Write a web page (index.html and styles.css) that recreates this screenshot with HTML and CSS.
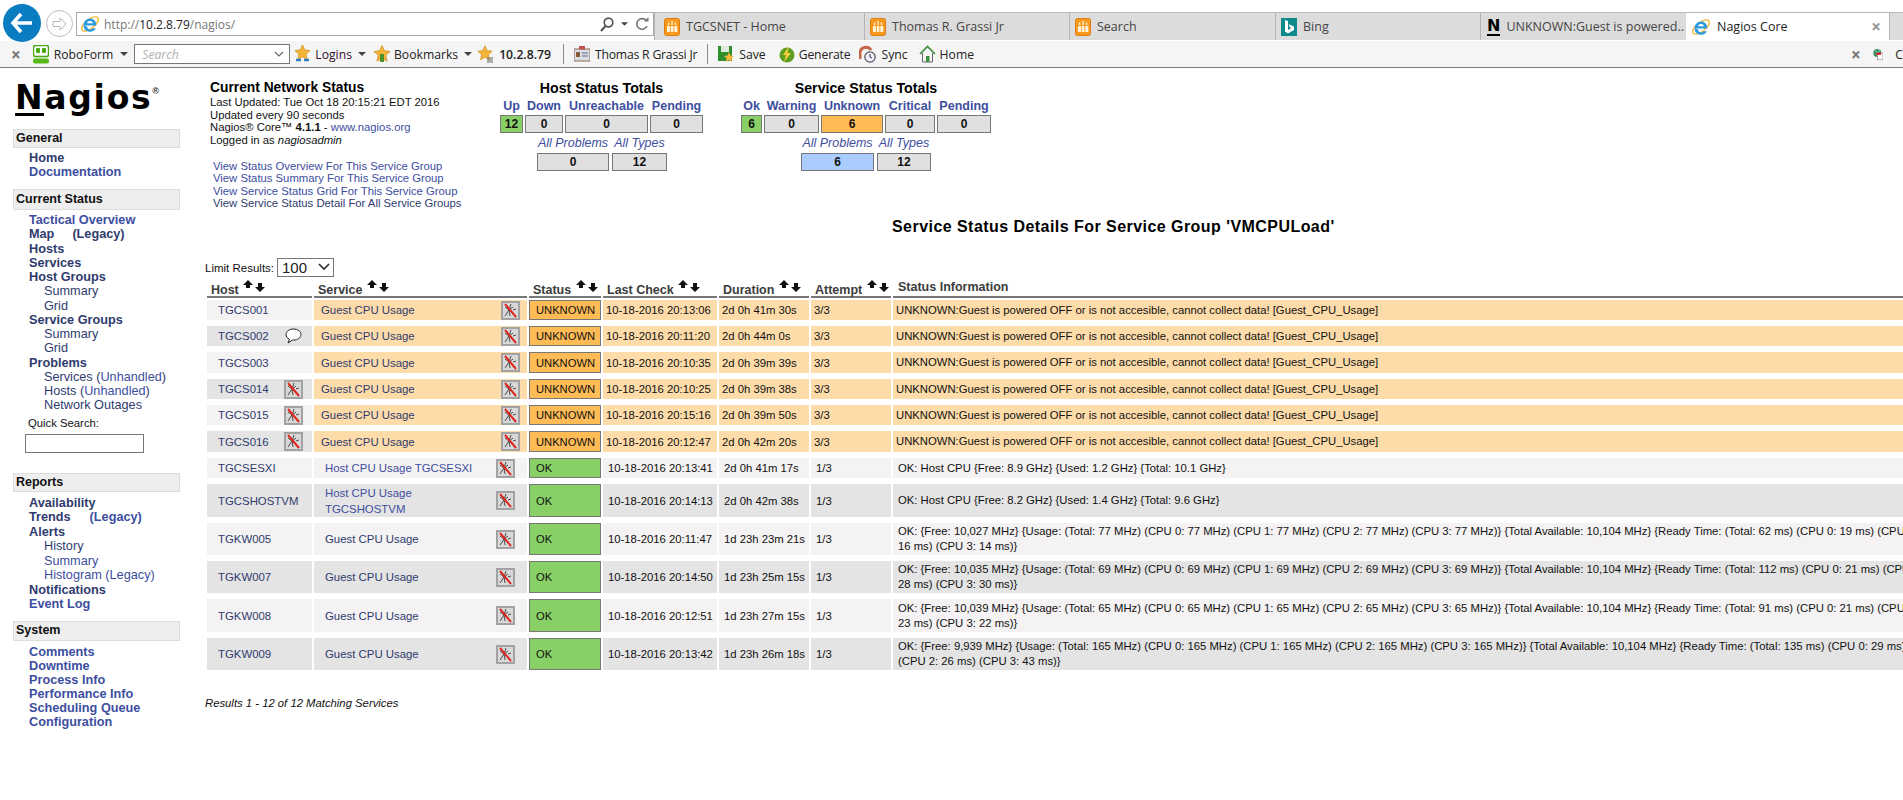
FILE: index.html
```html
<!DOCTYPE html>
<html lang="en">
<head>
<meta charset="utf-8">
<title>Nagios Core</title>
<link rel="stylesheet" href="styles.css">
</head>
<body>
<svg class="defs" width="0" height="0" aria-hidden="true">
  <symbol id="i-ie" viewBox="0 0 20 20">
    <ellipse cx="10" cy="10" rx="10" ry="4.500" transform="rotate(-38 10 10)" fill="none" stroke="#f2b632" stroke-width="1.300"/>
    <path d="M4 11.500h12.300c.2-4-2.500-7-6.200-7-3.700 0-6.500 3-6.500 7 0 3.800 2.800 6.300 6.500 6.300 2.800 0 4.800-1.300 5.700-3.500h-3.200c-.6.800-1.400 1.200-2.500 1.200-1.700 0-3-1.100-3-2.900zm3.100-2.300c.2-1.400 1.300-2.300 2.900-2.300s2.700.9 2.900 2.300z" fill="#2a9ae0"/>
  </symbol>
  <symbol id="i-tab" viewBox="0 0 16 20">
    <rect x=".5" y="1.500" width="15" height="17" rx="2" fill="#f79a1e" stroke="#e07c10"/>
    <path d="M3 9h3v6H3zM6.800 9h2.600v6H6.800zM10.300 9h3v6h-3zM4 5.500h1.300v2.500H4zM7.400 4h1.300v4H7.400zM10.800 5.500h1.300v2.500h-1.300z" fill="#fff3dc"/>
  </symbol>
  <symbol id="i-broken" viewBox="0 0 19 19">
    <rect x="1" y="1" width="17" height="17" fill="#d8d8d8" stroke="#a2a2a2" stroke-width="2"/>
    <path d="M10 3L8 9l-4 6M8 9l4-3M8 9l1 6M8 9l6 5M4 6l4 3M12 9l3-1" fill="none" stroke="#4a4a4a" stroke-width="1"/>
    <path d="M4 3l11 13" stroke="#e0261c" stroke-width="2"/>
  </symbol>
  <symbol id="i-star" viewBox="0 0 20 20">
    <path d="M10 1l2.700 6 6.300.7-4.700 4.300 1.300 6.500L10 15.200 4.400 18.500l1.300-6.500L1 7.700 7.300 7z" fill="#f4b53a" stroke="#c98a1a" stroke-width=".8"/>
  </symbol>
  <symbol id="i-caret" viewBox="0 0 8 4"><path d="M0 0h8L4 4z" fill="#444"/></symbol>
  <symbol id="i-sort" viewBox="0 0 22 12">
    <path d="M5 0l5 5H7v3H3V5H0z" fill="#111"/>
    <path d="M17 12l-5-5h3V3h4v4h3z" fill="#111"/>
  </symbol>
</svg>

<header class="browser">
  <div class="navrow">
    <div class="back">
      <svg width="24" height="22" viewBox="0 0 24 22"><path d="M11 2L3 11l8 9M3 11h19" fill="none" stroke="#fff" stroke-width="3.600"/></svg>
    </div>
    <div class="forward">
      <svg width="16" height="14" viewBox="0 0 16 14"><path d="M8 1l6 6-6 6V9.500H1v-5h7z" fill="none" stroke="#b4b4b4"/></svg>
    </div>
    <div class="address">
      <svg class="addr-ie" width="20" height="20"><use href="#i-ie"/></svg>
      <span class="url">http://<b>10.2.8.79</b>/nagios/</span>
      <span class="addr-tools">
        <svg width="14" height="15" viewBox="0 0 14 15"><circle cx="8.500" cy="5.500" r="4.300" fill="none" stroke="#555" stroke-width="1.700"/><path d="M5.500 9L1 14" stroke="#555" stroke-width="2"/></svg>
        <svg width="7" height="4"><use href="#i-caret"/></svg>
        <svg width="14" height="14" viewBox="0 0 14 14"><path d="M11.500 4A5.300 5.300 0 1 0 12 9" fill="none" stroke="#777" stroke-width="1.700"/><path d="M9 4.500h4.500V0z" fill="#777"/></svg>
      </span>
    </div>
    <nav class="tabs">
      <div class="tab w210 first"><svg width="16" height="20"><use href="#i-tab"/></svg><span>TGCSNET - Home</span></div>
      <div class="tab w205"><svg width="16" height="20"><use href="#i-tab"/></svg><span>Thomas R. Grassi Jr</span></div>
      <div class="tab w206"><svg width="16" height="20"><use href="#i-tab"/></svg><span>Search</span></div>
      <div class="tab w205">
        <svg width="16" height="18" viewBox="0 0 16 18"><rect width="16" height="18" fill="#0e8a8a"/><path d="M4 2l3 1v9l3.500-2-1.800-.8-1-3 5.300 2.300v3.500L7 15.500 4 13.500z" fill="#fff"/></svg>
        <span>Bing</span></div>
      <div class="tab w205 tab-n"><span class="n-icon">N</span><span>UNKNOWN:Guest is powered...</span></div>
      <div class="tab active"><svg width="20" height="20"><use href="#i-ie"/></svg><span>Nagios Core</span><span class="tab-x">×</span></div>
    </nav>
  </div>
  <div class="favbar">
    <span class="fx">×</span>
    <span class="fav roboform">
      <svg width="16" height="19" viewBox="0 0 16 19"><rect x=".5" y=".5" width="15" height="11" rx="2" fill="#fff" stroke="#49a80e" stroke-width="1.500"/><rect x="3" y="3" width="4" height="5" rx="1" fill="#49a80e"/><rect x="9" y="3" width="4" height="5" rx="1" fill="#49a80e"/><rect y="13.500" width="16" height="5" rx="2" fill="#57b81a"/></svg>
      <span>RoboForm</span><svg class="fcaret" width="8" height="4"><use href="#i-caret"/></svg>
    </span>
    <div class="fsearch"><span>Search</span><svg width="10" height="6" viewBox="0 0 10 6"><path d="M1 1l4 4 4-4" fill="none" stroke="#666" stroke-width="1.200"/></svg></div>
    <span class="fav logins">
      <svg width="17" height="20" viewBox="0 0 17 20"><use href="#i-star" width="17" height="17"/><path d="M2 16h5M10 16h5" stroke="#2f7fc8" stroke-width="2.500"/></svg>
      <span class="plain">Logins</span><svg class="fcaret" width="8" height="4"><use href="#i-caret"/></svg>
    </span>
    <span class="fav bookmarks">
      <svg width="18" height="20" viewBox="0 0 18 20"><use href="#i-star" width="18" height="19"/><rect x="7" y="10" width="4" height="8" fill="#4c8f2c"/></svg>
      <span>Bookmarks</span><svg class="fcaret" width="8" height="4"><use href="#i-caret"/></svg>
    </span>
    <span class="fav ip">
      <svg width="17" height="20" viewBox="0 0 17 20"><use href="#i-star" width="16" height="18"/><path d="M10 14h6M10 16h6M10 18h6" stroke="#666"/></svg>
      <b>10.2.8.79</b>
    </span>
    <i class="fsep sep1"></i>
    <span class="fav thomas"><svg width="16" height="16" viewBox="0 0 16 16"><rect y="3" width="16" height="12" fill="#d8dde6" stroke="#8b6a50"/><rect x="5" y="0" width="6" height="3.500" fill="#c0504d"/><rect x="2" y="6" width="4" height="5" fill="#8b5a3a"/><path d="M8 7h6M8 10h6" stroke="#667"/></svg><span>Thomas R Grassi Jr</span></span>
    <i class="fsep"></i>
    <span class="fav"><svg width="16" height="18" viewBox="0 0 16 18"><rect y="1" width="14" height="15" fill="#2f8f2f"/><rect x="3" y="1" width="8" height="6" fill="#dfe9df"/><path d="M11 7l1.500 3.500 3.500.4-2.600 2.400.8 3.700-3.200-1.900-3.200 1.900.8-3.700L6 10.900l3.500-.4z" fill="#f4b53a"/></svg><span>Save</span></span>
    <span class="fav fgen"><svg width="16" height="18" viewBox="0 0 16 18"><circle cx="8" cy="10" r="7.500" fill="#5d9e22"/><path d="M10 1L4 10h3l-2 7 7-9H8.500z" fill="#f6cf3c"/></svg><span>Generate</span></span>
    <span class="fav fsync"><svg width="17" height="18" viewBox="0 0 17 18"><path d="M1 14V8a6 6 0 0 1 11-3" fill="none" stroke="#c8664a" stroke-width="3"/><circle cx="11" cy="12" r="5.200" fill="#eef" stroke="#555" stroke-width="1.200"/><path d="M11 9v3l2 1" fill="none" stroke="#333"/></svg><span>Sync</span></span>
    <span class="fav fhome"><svg width="17" height="18" viewBox="0 0 17 18"><path d="M1 9l7.500-7.500L16 9" fill="none" stroke="#3c8f3c" stroke-width="1.600"/><path d="M3.500 8v9h10V8" fill="#f7f7f0" stroke="#667"/><rect x="7" y="11" width="3.500" height="6" fill="#3c8f3c"/></svg><span>Home</span></span>
    <span class="fright">
      <span class="fx">×</span>
      <svg width="17" height="19" viewBox="0 0 17 19"><circle cx="7" cy="7" r="6.500" fill="#3f8f5a"/><path d="M3 3l4 3-2 4M9 1l2 4" stroke="#9dd0ee" fill="none" stroke-width="1.500"/><rect x="7" y="7" width="9" height="11" fill="#fff" stroke="#888"/><rect x="5" y="7" width="8" height="3" fill="#d8141c"/></svg>
      <span>C</span>
    </span>
  </div>
</header>

<div class="page">
  <aside class="side">
    <div class="logo"><span class="logo-word"><span class="logo-n">N</span>agios</span><sup>®</sup></div>

    <h2 class="sect s19">General</h2>
    <ul class="menu gen">
      <li class="top"><a class="v">Home</a></li>
      <li class="top"><a>Documentation</a></li>
    </ul>

    <h2 class="sect s21">Current Status</h2>
    <ul class="menu cur">
      <li class="top"><a>Tactical Overview</a></li>
      <li class="top"><a class="v">Map</a><a class="v legacy">(Legacy)</a></li>
      <li class="top"><a class="v">Hosts</a></li>
      <li class="top"><a class="v">Services</a></li>
      <li class="top"><a class="v">Host Groups</a></li>
      <li class="sub"><a class="v">Summary</a></li>
      <li class="sub"><a class="v">Grid</a></li>
      <li class="top"><a class="v">Service Groups</a></li>
      <li class="sub"><a class="v">Summary</a></li>
      <li class="sub"><a class="v">Grid</a></li>
      <li class="top"><a class="v">Problems</a></li>
      <li class="sub"><a class="v">Services</a> (<a>Unhandled</a>)</li>
      <li class="sub"><a class="v">Hosts</a> (<a>Unhandled</a>)</li>
      <li class="sub"><a class="v">Network Outages</a></li>
    </ul>
    <label class="qlabel" for="q">Quick Search:</label>
    <input class="qinput" id="q" type="text">

    <h2 class="sect s19 reports">Reports</h2>
    <ul class="menu rep">
      <li class="top"><a class="v">Availability</a></li>
      <li class="top"><a class="v">Trends</a><a class="legacy2">(Legacy)</a></li>
      <li class="top"><a class="v">Alerts</a></li>
      <li class="sub"><a class="v">History</a></li>
      <li class="sub"><a>Summary</a></li>
      <li class="sub"><a>Histogram (Legacy)</a></li>
      <li class="top"><a class="v">Notifications</a></li>
      <li class="top"><a>Event Log</a></li>
    </ul>

    <h2 class="sect s20">System</h2>
    <ul class="menu sys">
      <li class="top"><a>Comments</a></li>
      <li class="top"><a>Downtime</a></li>
      <li class="top"><a>Process Info</a></li>
      <li class="top"><a>Performance Info</a></li>
      <li class="top"><a>Scheduling Queue</a></li>
      <li class="top"><a>Configuration</a></li>
    </ul>
  </aside>

  <main class="main">
    <section class="summary">
      <div class="netstatus">
        <h3>Current Network Status</h3>
        <p>Last Updated: Tue Oct 18 20:15:21 EDT 2016</p>
        <p>Updated every 90 seconds</p>
        <p>Nagios® Core™ <b>4.1.1</b> - <a>www.nagios.org</a></p>
        <p>Logged in as <i>nagiosadmin</i></p>
        <ul class="viewlinks">
          <li><a>View Status Overview For This Service Group</a></li>
          <li><a>View Status Summary For This Service Group</a></li>
          <li><a>View Service Status Grid For This Service Group</a></li>
          <li><a class="v">View Service Status Detail For All Service Groups</a></li>
        </ul>
      </div>

      <div class="totals hosts">
        <h3>Host Status Totals</h3>
        <div class="tgrid hostgrid">
          <a>Up</a><a>Down</a><a>Unreachable</a><a>Pending</a>
          <b class="good">12</b><b>0</b><b>0</b><b>0</b>
        </div>
        <div class="tgrid2 hostgrid2">
          <a>All Problems</a><a>All Types</a>
          <b>0</b><b>12</b>
        </div>
      </div>

      <div class="totals services">
        <h3>Service Status Totals</h3>
        <div class="tgrid svcgrid">
          <a>Ok</a><a>Warning</a><a>Unknown</a><a>Critical</a><a>Pending</a>
          <b class="good">6</b><b>0</b><b class="warn">6</b><b>0</b><b>0</b>
        </div>
        <div class="tgrid2 svcgrid2">
          <a>All Problems</a><a>All Types</a>
          <b class="prob">6</b><b>12</b>
        </div>
      </div>
    </section>

    <h1 class="title">Service Status Details For Service Group 'VMCPULoad'</h1>

    <div class="limit">
      <span>Limit Results:</span>
      <div class="selectwrap">
        <select class="limitsel"><option>100</option></select>
        <svg class="chev" width="12" height="8" viewBox="0 0 12 8"><path d="M1 1l5 5 5-5" fill="none" stroke="#333" stroke-width="1.700"/></svg>
      </div>
    </div>

    <div class="grid">
      <div class="hrow">
        <div class="h">Host <svg class="sort" width="22" height="12"><use href="#i-sort"/></svg></div>
        <div class="h">Service <svg class="sort" width="22" height="12"><use href="#i-sort"/></svg></div>
        <div class="h">Status <svg class="sort" width="22" height="12"><use href="#i-sort"/></svg></div>
        <div class="h">Last Check <svg class="sort" width="22" height="12"><use href="#i-sort"/></svg></div>
        <div class="h">Duration <svg class="sort" width="22" height="12"><use href="#i-sort"/></svg></div>
        <div class="h">Attempt <svg class="sort" width="22" height="12"><use href="#i-sort"/></svg></div>
        <div class="h hinfo">Status Information</div>
      </div>

      <div class="row odd unk">
        <div class="c host"><a class="v">TGCS001</a></div>
        <div class="c svc"><a class="v">Guest CPU Usage</a><svg width="19" height="19"><use href="#i-broken"/></svg></div>
        <div class="c st">UNKNOWN</div><div class="c">10-18-2016 20:13:06</div><div class="c">2d 0h 41m 30s</div><div class="c">3/3</div>
        <div class="c info"><span>UNKNOWN:Guest is powered <b class="off">OFF</b> or is not accesible, cannot collect data! [Guest_CPU_Usage]</span></div>
      </div>
      <div class="row even unk">
        <div class="c host"><a class="v">TGCS002</a><svg class="bubble" width="17" height="16" viewBox="0 0 17 16"><path d="M8.500 1C4.300 1 1 3.500 1 6.500c0 2.200 1.600 3.800 3.500 4.600L3 15l4.500-3c.4 0 .7.100 1 .1 4.200 0 7.500-2.500 7.500-5.600S12.700 1 8.500 1z" fill="#fff" stroke="#222"/></svg></div>
        <div class="c svc"><a class="v">Guest CPU Usage</a><svg width="19" height="19"><use href="#i-broken"/></svg></div>
        <div class="c st">UNKNOWN</div><div class="c">10-18-2016 20:11:20</div><div class="c">2d 0h 44m 0s</div><div class="c">3/3</div>
        <div class="c info"><span>UNKNOWN:Guest is powered <b class="off">OFF</b> or is not accesible, cannot collect data! [Guest_CPU_Usage]</span></div>
      </div>
      <div class="row odd unk r21">
        <div class="c host"><a class="v">TGCS003</a></div>
        <div class="c svc"><a class="v">Guest CPU Usage</a><svg width="19" height="19"><use href="#i-broken"/></svg></div>
        <div class="c st">UNKNOWN</div><div class="c">10-18-2016 20:10:35</div><div class="c">2d 0h 39m 39s</div><div class="c">3/3</div>
        <div class="c info"><span>UNKNOWN:Guest is powered <b class="off">OFF</b> or is not accesible, cannot collect data! [Guest_CPU_Usage]</span></div>
      </div>
      <div class="row even unk">
        <div class="c host"><a class="v">TGCS014</a><svg width="19" height="19"><use href="#i-broken"/></svg></div>
        <div class="c svc"><a class="v">Guest CPU Usage</a><svg width="19" height="19"><use href="#i-broken"/></svg></div>
        <div class="c st">UNKNOWN</div><div class="c">10-18-2016 20:10:25</div><div class="c">2d 0h 39m 38s</div><div class="c">3/3</div>
        <div class="c info"><span>UNKNOWN:Guest is powered <b class="off">OFF</b> or is not accesible, cannot collect data! [Guest_CPU_Usage]</span></div>
      </div>
      <div class="row odd unk">
        <div class="c host"><a class="v">TGCS015</a><svg width="19" height="19"><use href="#i-broken"/></svg></div>
        <div class="c svc"><a class="v">Guest CPU Usage</a><svg width="19" height="19"><use href="#i-broken"/></svg></div>
        <div class="c st">UNKNOWN</div><div class="c">10-18-2016 20:15:16</div><div class="c">2d 0h 39m 50s</div><div class="c">3/3</div>
        <div class="c info"><span>UNKNOWN:Guest is powered <b class="off">OFF</b> or is not accesible, cannot collect data! [Guest_CPU_Usage]</span></div>
      </div>
      <div class="row even unk r21">
        <div class="c host"><a class="v">TGCS016</a><svg width="19" height="19"><use href="#i-broken"/></svg></div>
        <div class="c svc"><a class="v">Guest CPU Usage</a><svg width="19" height="19"><use href="#i-broken"/></svg></div>
        <div class="c st">UNKNOWN</div><div class="c">10-18-2016 20:12:47</div><div class="c">2d 0h 42m 20s</div><div class="c">3/3</div>
        <div class="c info"><span>UNKNOWN:Guest is powered <b class="off">OFF</b> or is not accesible, cannot collect data! [Guest_CPU_Usage]</span></div>
      </div>

      <div class="row odd good">
        <div class="c host"><a class="v">TGCSESXI</a></div>
        <div class="c svc"><a>Host CPU Usage TGCSESXI</a><svg width="19" height="19"><use href="#i-broken"/></svg></div>
        <div class="c st">OK</div><div class="c">10-18-2016 20:13:41</div><div class="c">2d 0h 41m 17s</div><div class="c">1/3</div>
        <div class="c info"><span>OK: Host CPU {Free: 8.9 GHz} {Used: 1.2 GHz} {Total: 10.1 GHz}</span></div>
      </div>
      <div class="row even good r33">
        <div class="c host"><a class="v">TGCSHOSTVM</a></div>
        <div class="c svc"><a class="wrap">Host CPU Usage TGCSHOSTVM</a><svg width="19" height="19"><use href="#i-broken"/></svg></div>
        <div class="c st">OK</div><div class="c">10-18-2016 20:14:13</div><div class="c">2d 0h 42m 38s</div><div class="c">1/3</div>
        <div class="c info"><span>OK: Host CPU {Free: 8.2 GHz} {Used: 1.4 GHz} {Total: 9.6 GHz}</span></div>
      </div>
      <div class="row odd good r32">
        <div class="c host"><a class="v">TGKW005</a></div>
        <div class="c svc"><a class="v">Guest CPU Usage</a><svg width="19" height="19"><use href="#i-broken"/></svg></div>
        <div class="c st">OK</div><div class="c">10-18-2016 20:11:47</div><div class="c">1d 23h 23m 21s</div><div class="c">1/3</div>
        <div class="c info"><span>OK: {Free: 10,027 MHz} {Usage: (Total: 77 MHz) (CPU 0: 77 MHz) (CPU 1: 77 MHz) (CPU 2: 77 MHz) (CPU 3: 77 MHz)} {Total Available: 10,104 MHz} {Ready Time: (Total: 62 ms) (CPU 0: 19 ms) (CPU 1: 13 ms) (CPU 2:<br>16 ms) (CPU 3: 14 ms)}</span></div>
      </div>
      <div class="row even good r32">
        <div class="c host"><a class="v">TGKW007</a></div>
        <div class="c svc"><a class="v">Guest CPU Usage</a><svg width="19" height="19"><use href="#i-broken"/></svg></div>
        <div class="c st">OK</div><div class="c">10-18-2016 20:14:50</div><div class="c">1d 23h 25m 15s</div><div class="c">1/3</div>
        <div class="c info"><span>OK: {Free: 10,035 MHz} {Usage: (Total: 69 MHz) (CPU 0: 69 MHz) (CPU 1: 69 MHz) (CPU 2: 69 MHz) (CPU 3: 69 MHz)} {Total Available: 10,104 MHz} {Ready Time: (Total: 112 ms) (CPU 0: 21 ms) (CPU 1: 33 ms) (CPU 2:<br>28 ms) (CPU 3: 30 ms)}</span></div>
      </div>
      <div class="row odd good r33">
        <div class="c host"><a class="v">TGKW008</a></div>
        <div class="c svc"><a class="v">Guest CPU Usage</a><svg width="19" height="19"><use href="#i-broken"/></svg></div>
        <div class="c st">OK</div><div class="c">10-18-2016 20:12:51</div><div class="c">1d 23h 27m 15s</div><div class="c">1/3</div>
        <div class="c info"><span>OK: {Free: 10,039 MHz} {Usage: (Total: 65 MHz) (CPU 0: 65 MHz) (CPU 1: 65 MHz) (CPU 2: 65 MHz) (CPU 3: 65 MHz)} {Total Available: 10,104 MHz} {Ready Time: (Total: 91 ms) (CPU 0: 21 ms) (CPU 1: 25 ms) (CPU 2:<br>23 ms) (CPU 3: 22 ms)}</span></div>
      </div>
      <div class="row even good r32">
        <div class="c host"><a class="v">TGKW009</a></div>
        <div class="c svc"><a class="v">Guest CPU Usage</a><svg width="19" height="19"><use href="#i-broken"/></svg></div>
        <div class="c st">OK</div><div class="c">10-18-2016 20:13:42</div><div class="c">1d 23h 26m 18s</div><div class="c">1/3</div>
        <div class="c info"><span>OK: {Free: 9,939 MHz} {Usage: (Total: 165 MHz) (CPU 0: 165 MHz) (CPU 1: 165 MHz) (CPU 2: 165 MHz) (CPU 3: 165 MHz)} {Total Available: 10,104 MHz} {Ready Time: (Total: 135 ms) (CPU 0: 29 ms) (CPU 1: 37 ms)<br>(CPU 2: 26 ms) (CPU 3: 43 ms)}</span></div>
      </div>
    </div>

    <p class="results">Results 1 - 12 of 12 Matching Services</p>
  </main>
</div>
</body>
</html>
```
FILE: styles.css
```css
* { box-sizing: border-box; }
html, body { margin: 0; padding: 0; height: 800px; overflow: hidden; background: #fff; }
body { font-family: "Liberation Sans", Arial, sans-serif; font-size: 11.300px; color: #111; }
.defs { position: absolute; }
a { color: #3d4ea0; cursor: pointer; }
a.v { color: #2f3b6e; }
ul { list-style: none; margin: 0; padding: 0; }
h1, h2, h3, p { margin: 0; }

/* Browser chrome */
.browser { font-family: "Open Sans", sans-serif; width: 1903px; }
.navrow { display: flex; align-items: flex-start; height: 41px; padding-left: 3px; }
.back { width: 38px; height: 38px; margin-top: 4px; border-radius: 50%; background: #0a7cc1; display: flex; align-items: center; justify-content: center; flex: none; }
.forward { width: 27px; height: 27px; margin: 10px 0 0 5px; border-radius: 50%; border: 1px solid #bbb; display: flex; align-items: center; justify-content: center; flex: none; }
.address { width: 578px; height: 24px; margin: 12px 0 0 3px; border: 1px solid #aaa; display: flex; align-items: center; padding-left: 3px; flex: none; }
.addr-ie { flex: none; }
.url { margin-left: 4px; font-size: 12px; color: #777; }
.url b { font-weight: 400; color: #222; }
.addr-tools { margin-left: auto; display: flex; align-items: center; gap: 7px; padding-right: 4px; }
.tabs { display: flex; height: 28px; margin-top: 12px; flex: 1; border-top: 1px solid #b8b8b8; background: #dcdcdc; font-size: 12.500px; color: #444; }
.tab { display: flex; align-items: center; gap: 6px; height: 27px; padding-left: 5px; border-left: 1px solid #b4b4b4; flex: none; white-space: nowrap; }
.tab.first { padding-left: 9px; }
.w210 { width: 210px; }
.w205 { width: 205px; }
.w206 { width: 206px; }
.tab-n { padding-left: 6px; }
.n-icon { width: 15px; font-family: "DejaVu Sans", sans-serif; font-weight: 700; font-size: 16px; line-height: 16px; color: #000; border-bottom: 2px solid #000; text-align: center; }
.tab.active { width: 205px; background: #fff; color: #222; padding-left: 5px; border-left: 1px solid #dcdcdc; border-right: 1px solid #b4b4b4; }
.tab-x { margin-left: auto; margin-right: 8px; font-size: 17px; font-weight: 700; color: #999; }

.favbar { display: flex; align-items: center; height: 27px; background: #f5f5f5; border-bottom: 1px solid #7a7a7a; padding-left: 11px; font-size: 12.200px; color: #222; white-space: nowrap; }
.fx { font-size: 17px; font-weight: 700; color: #777; line-height: 1; }
.fav { display: flex; align-items: center; gap: 5px; margin-left: 10px; }
.fcaret { margin-left: 2px; }
.roboform { margin-left: 12px; }
.fsearch { display: flex; align-items: center; justify-content: space-between; width: 156px; height: 20px; margin-left: 6px; background: #fff; border: 1px solid #777; padding: 0 5px 0 7px; font-style: italic; color: #b0b0b0; }
.logins { margin-left: 4px; gap: 4px; }
.bookmarks { margin-left: 7px; gap: 3px; }
.bookmarks .fcaret { margin-left: 3px; }
.ip { margin-left: 5px; }
.plain { color: #301030; }
.ip b { font-weight: 600; color: #222; }
.thomas { letter-spacing: -.2px; }
.fsep { width: 1px; height: 20px; background: #888; margin-left: 10px; }
.sep1 { margin-left: 12px; }
.fgen { margin-left: 13px; gap: 4px; letter-spacing: -.15px; }
.fsync { margin-left: 9px; }
.fhome { margin-left: 11px; gap: 4px; }
.fright { margin-left: auto; display: flex; align-items: center; gap: 12px; width: 52px; }

/* Page */
.page { display: flex; align-items: flex-start; }
.side { width: 205px; padding-left: 13px; flex: none; }
.logo { height: 61px; padding: 13px 0 0 2px; display: flex; align-items: flex-start; }
.logo-word { font-family: "DejaVu Sans", sans-serif; font-weight: 700; font-size: 33px; line-height: 33px; letter-spacing: 1.700px; color: #000; }
.logo-n { display: inline-block; border-bottom: 3px solid #000; line-height: 31px; }
.logo sup { font-size: 9px; line-height: 10px; font-weight: 700; margin-top: 5px; color: #333; }
.sect { width: 167px; background: #eee; border: 1px solid #ddd; padding-left: 2px; font-size: 12.500px; line-height: 16px; font-weight: 700; color: #111; }
.s19 { height: 19px; }
.s20 { height: 20px; }
.s21 { height: 21px; line-height: 18px; }
.reports { margin-top: 20px; }
.menu { font-size: 12.700px; }
.menu li { white-space: nowrap; }
.menu .top { padding-left: 16px; font-weight: 700; }
.menu .sub { padding-left: 31px; color: #2f3b6e; }
.gen { line-height: 14px; padding: 3px 0 10px; }
.cur { line-height: 14.250px; padding-top: 3px; }
.rep { line-height: 14.500px; padding: 4px 0 9px; }
.sys { line-height: 14px; padding-top: 4px; }
.legacy { margin-left: 18px; }
.legacy2 { margin-left: 19px; }
.qlabel { display: block; margin: 3px 0 0 15px; font-size: 11.300px; line-height: 14px; }
.qinput { display: block; width: 119px; height: 19px; margin: 4px 0 0 12px; border: 1px solid #777; background: #fff; padding: 0; }

.main { padding-top: 13px; width: 1698px; flex: none; }
.summary { display: flex; align-items: flex-start; height: 136px; padding-left: 5px; }
.netstatus { width: 290px; flex: none; line-height: 12.500px; }
.netstatus h3 { font-size: 13.800px; line-height: 14px; font-weight: 700; margin-bottom: 1px; color: #000; }
.viewlinks { margin: 14px 0 0 3px; line-height: 12.400px; white-space: nowrap; }
.totals { flex: none; }
.totals h3 { font-size: 14.200px; line-height: 14px; font-weight: 700; text-align: center; color: #000; }
.hosts { width: 203px; }
.services { width: 250px; margin-left: 38px; }
.tgrid { display: grid; gap: 3px 2px; margin-top: 5px; text-align: center; font-size: 12px; }
.hostgrid { grid-template-columns: 23px 38px 83px 53px; }
.svcgrid { grid-template-columns: 21px 55px 62px 50px 54px; }
.tgrid a { font-weight: 700; font-size: 12.500px; line-height: 12px; white-space: nowrap; }
.tgrid b, .tgrid2 b { display: block; height: 18px; line-height: 16px; font-size: 12px; font-weight: 700; background: #e0e0e0; border: 1px solid #777; color: #111; }
.tgrid b.good { background: #88d066; }
.tgrid b.warn { background: #ffbb55; }
.tgrid2 b.prob { background: #aaccff; }
.tgrid2 { display: grid; gap: 3px 3px; margin-top: 4px; text-align: center; }
.tgrid2 a { font-style: italic; font-weight: 400; font-size: 12.500px; line-height: 13px; white-space: nowrap; }
.tgrid2 b { height: 18px; }
.hostgrid2 { grid-template-columns: 72px 55px; margin-left: 37px; width: 130px; }
.svcgrid2 { grid-template-columns: 73px 54px; margin-left: 60px; width: 130px; }

.title { font-size: 16px; line-height: 16px; letter-spacing: .450px; font-weight: 700; color: #000; margin: 2px 0 0 687px; white-space: nowrap; }
.limit { display: flex; align-items: center; gap: 3px; height: 19px; margin-top: 23px; font-size: 11.500px; }
.selectwrap { position: relative; width: 57px; height: 19px; }
.limitsel { appearance: none; width: 57px; height: 19px; border: 1px solid #777; border-radius: 0; background: #fff; font-family: "Liberation Sans", sans-serif; font-size: 15px; padding: 0 0 0 4px; color: #222; }
.chev { position: absolute; right: 4px; top: 5px; pointer-events: none; }

.grid { display: grid; grid-template-columns: 105px 213px 72px 114px 90px 80px 1300px; column-gap: 2px; row-gap: 6px; margin: 3px 0 0 2px; width: 1700px; }
.hrow, .row { display: contents; }
.h { height: 18px; margin-bottom: -4px; border-bottom: 2px solid #777; font-weight: 700; font-size: 12.500px; line-height: 15px; color: #3c3c3c; padding-left: 4px; white-space: nowrap; }
.hinfo { padding-left: 5px; }
.sort { margin-left: 1px; vertical-align: 2px; }
.c { height: 20px; display: flex; align-items: center; padding-left: 3px; background: #f4f2f2; white-space: nowrap; font-size: 11.300px; }
.even .c { background: #e4e4e4; }
.unk .c { background: #fddcaa; }
.good .c { padding-left: 5px; }
.r21 .c { height: 21px; }
.r32 .c { height: 32px; }
.r33 .c { height: 33px; }
.c.host, .c.svc { font-size: 11.400px; }
.unk .host, .good .host { padding: 0 9px 0 11px; justify-content: space-between; }
.odd .host { background: #f4f2f2; }
.even .host { background: #e4e4e4; }
.bubble { margin-right: 1px; }
.svc { justify-content: space-between; padding: 0 7px 0 7px; }
.good .svc { padding: 0 12px 0 11px; }
.wrap { white-space: normal; width: 110px; line-height: 16px; }
.c.st { border: 1px solid #777; padding-left: 6px; font-size: 11.200px; }
.unk .st { background: #ffbb55; }
.good .st { background: #88d066; }
.c.info { line-height: 15px; }
.off { font-weight: 400; }
.results { margin: 27px 0 0 0; font-style: italic; font-size: 11.300px; }
```
